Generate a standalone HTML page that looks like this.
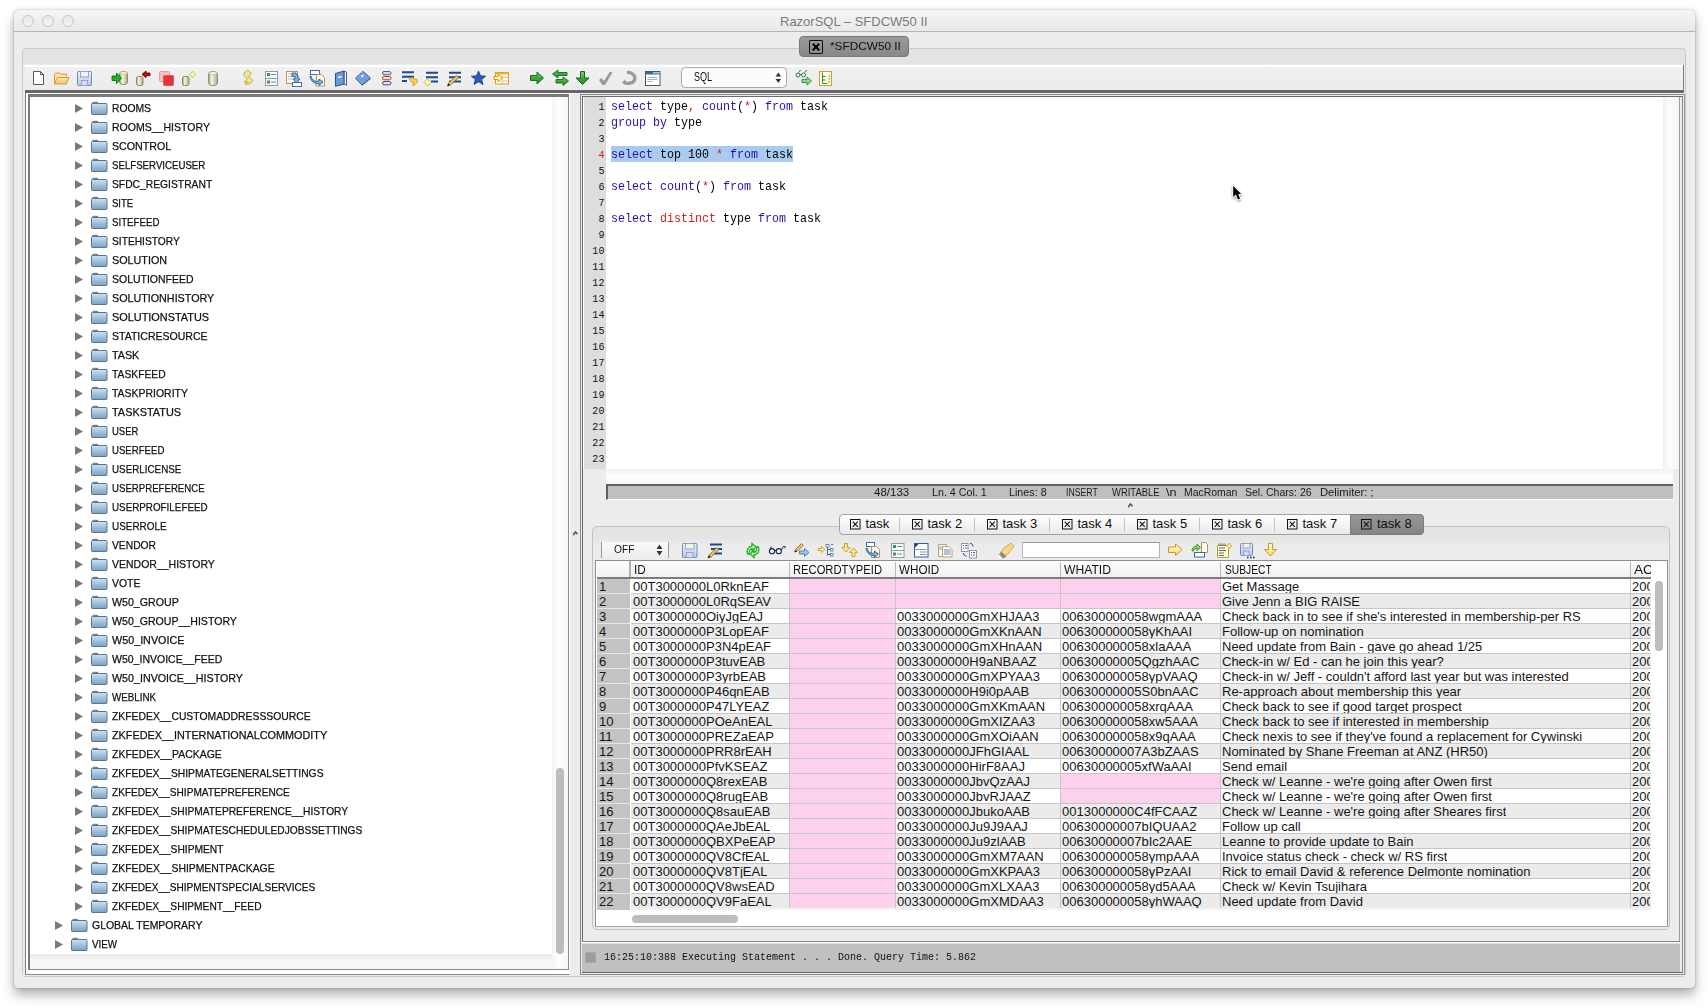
<!DOCTYPE html><html><head><meta charset="utf-8"><title>RazorSQL</title><style>
*{margin:0;padding:0;box-sizing:border-box}
html,body{width:1708px;height:1008px;overflow:hidden;background:#fff;font-family:"Liberation Sans",sans-serif;color:#000}
.a{position:absolute}
.t{position:absolute;white-space:pre;line-height:1}

.tr{font-size:11px;color:#111;-webkit-text-stroke:0.25px #111;transform-origin:0 0;transform:scaleX(0.85)}
.st{font-size:11px;color:#222}
.ln{font-family:"Liberation Mono",monospace;font-size:10px;text-align:right;letter-spacing:0.4px}
.code{font-family:"Liberation Mono",monospace;font-size:11.67px;transform-origin:0 8.945px;transform:scaleY(1.12)}
.tab{font-size:13px;color:#111}
.hd{font-size:12px;color:#111;transform-origin:0 0;transform:scaleX(0.93)}
.cell{font-size:13px;color:#151515}
</style></head><body><div class="a" style="left:14px;top:10px;width:1681px;height:978px;border-radius:5px 5px 4px 4px;box-shadow:0 7px 12px rgba(0,0,0,0.30),0 0 5px rgba(0,0,0,0.12),0 0 1px rgba(0,0,0,0.45);background:#ececec"></div><div class="a" style="left:14px;top:10px;width:1681px;height:22px;border-radius:5px 5px 0 0;background:linear-gradient(#f6f6f6,#e8e8e8);border-bottom:1px solid #b5b5b5"></div><div class="a" style="left:22px;top:15px;width:12px;height:12px;border-radius:50%;border:1px solid #c4c4c4;background:linear-gradient(#e9e9e9,#f3f3f3)"></div><div class="a" style="left:42px;top:15px;width:12px;height:12px;border-radius:50%;border:1px solid #c4c4c4;background:linear-gradient(#e9e9e9,#f3f3f3)"></div><div class="a" style="left:62px;top:15px;width:12px;height:12px;border-radius:50%;border:1px solid #c4c4c4;background:linear-gradient(#e9e9e9,#f3f3f3)"></div><div class="t" style="left:780px;top:15px;font-size:13px;color:#7b7b7b">RazorSQL – SFDCW50 II</div><div class="a" style="left:22px;top:48px;width:1664px;height:929px;border:1px solid #c9c9c9;border-radius:4px;background:#e4e4e4"></div><div class="a" style="left:799px;top:36px;width:110px;height:21px;border:1px solid #7a7a7a;border-radius:4px;background:linear-gradient(#9a9a9a,#888888)"></div><div class="a" style="left:809px;top:40px;width:14px;height:14px;border:1.5px solid #111;border-radius:1px"></div><svg class="a" style="left:809px;top:40px" width="14" height="14"><path d="M3.8 3.8L10.2 10.2M10.2 3.8L3.8 10.2" stroke="#000" stroke-width="2.1"/></svg><div class="t" style="left:829.60px;top:41.07px;font-size:11.5px;color:#111;transform:scaleX(1.0274);transform-origin:0 0;">*SFDCW50 II</div><div class="a" style="left:23px;top:64px;width:1662px;height:912px;background:#ececec"></div><div class="a" style="left:25px;top:65px;width:1659px;height:28px;background:linear-gradient(#ffffff 0,#ffffff 1.5px,#f1f1f1 2.5px,#ececec 25px,#777 25px,#555 27px,#888 28px);box-shadow:inset -1px 0 0 #7a7a7a"></div><svg class="a" style="left:0;top:0" width="850" height="100" viewBox="0 0 850 100"><defs>
<linearGradient id="cyl" x1="0" x2="1"><stop offset="0" stop-color="#9a9a80"/><stop offset="0.35" stop-color="#f6f6ee"/><stop offset="1" stop-color="#a8a890"/></linearGradient>
<linearGradient id="grn" x1="0" y1="0" x2="0" y2="1"><stop offset="0" stop-color="#7fd07f"/><stop offset="0.5" stop-color="#3aa83a"/><stop offset="1" stop-color="#2a8a2a"/></linearGradient>
<linearGradient id="sav" x1="0" y1="0" x2="0" y2="1"><stop offset="0" stop-color="#eef2fb"/><stop offset="1" stop-color="#b8c8ea"/></linearGradient>
<linearGradient id="fold" x1="0" y1="0" x2="0" y2="1"><stop offset="0" stop-color="#fde7b0"/><stop offset="1" stop-color="#f2c46c"/></linearGradient>
</defs><path d="M33.5 71.5h7l3 3v10h-10z" fill="#fff" stroke="#5a5a5a"/><path d="M40.5 71.5v3h3" fill="none" stroke="#5a5a5a"/><path d="M54.5 83.5v-9l1-1.5h4l1 1h6v2.5" fill="#fbe3a8" stroke="#d39a3a"/><path d="M54.5 83.5l3-6h11.5l-3 6.5h-11.5z" fill="url(#fold)" stroke="#d39a3a"/><rect x="77.5" y="71.5" width="14" height="14" rx="1" fill="url(#sav)" stroke="#6f8ac4"/><rect x="80.5" y="71.5" width="8" height="5.5" fill="#f4f4f0" stroke="#8ea3d0"/><rect x="81.5" y="80.5" width="6" height="5" fill="#d6def2" stroke="#8ea3d0"/><rect x="119.5" y="71.5" width="8" height="13" rx="3" fill="url(#cyl)" stroke="#8d8d3c"/><ellipse cx="123.5" cy="73" rx="3.5" ry="1.3" fill="#fff" stroke="#bdbd60" stroke-width="0.8"/><path d="M112 76h4.5v-3l5 5l-5 5.5v-3h-4.5z" fill="#1fb51f" stroke="#0a600a" stroke-width="0.8"/><rect x="136.5" y="76.5" width="6.5" height="9" rx="2" fill="url(#cyl)" stroke="#8d8d3c"/><path d="M150 73h-4v-2l-4 3.3l4 3.4v-2h4z" fill="#e00000" stroke="#400" stroke-width="0.8"/><rect x="159.5" y="71.5" width="10" height="10" rx="1" fill="#f6c0c0" stroke="#e89a9a"/><rect x="163.5" y="75.5" width="10" height="10" rx="1" fill="#e8323c" stroke="#d05a60"/><rect x="182.5" y="76.5" width="6.5" height="9" rx="2" fill="url(#cyl)" stroke="#8d8d3c"/><path d="M192.5 71l1.2 2.3l2.3 1.2l-2.3 1.2l-1.2 2.3l-1.2-2.3l-2.3-1.2l2.3-1.2z" fill="#ffffd0" stroke="#d8c040" stroke-width="0.9"/><rect x="208.5" y="71.5" width="9" height="14" rx="3.5" fill="url(#cyl)" stroke="#8f8f6a"/><ellipse cx="213" cy="73.2" rx="3.5" ry="1.4" fill="#fcfcf4" stroke="#b0b090" stroke-width="0.7"/><path d="M244 73l3.5-3l4 3.5l-3 3l4.5 4l-3.5 3.5l-3-0.5l-2-2l3-3l-3.5-3z" fill="#f0e890" stroke="#b8a840" stroke-width="0.9"/><circle cx="246.5" cy="83" r="1.6" fill="#e8d860" stroke="#a89830" stroke-width="0.6"/><rect x="265.5" y="71.5" width="12" height="14" fill="#fafcfc" stroke="#8aa0a0"/><line x1="265.5" y1="78.5" x2="277.5" y2="78.5" stroke="#8aa0a0"/><rect x="267" y="73" width="3" height="3" fill="#2a9a5a"/><rect x="267" y="80.5" width="3" height="3" fill="#6a7a8a"/><path d="M271 74.5h5M271 82h5" stroke="#4a6a6a" stroke-width="0.8"/><rect x="286.5" y="71.5" width="11" height="12" fill="#fdfbf0" stroke="#b09860"/><path d="M288 74h7M288 76.5h7M288 79h5" stroke="#9aaac0" stroke-width="0.7"/><path d="M292 73h4l2 3v3h2l-3.5 4l-3.5-4h2v-2.5h-3z" fill="#7ab8d8" stroke="#2a5a9a" stroke-width="0.9"/><rect x="292.5" y="82.5" width="9" height="4" fill="#fff" stroke="#4a6aa0"/><rect x="310.5" y="70.5" width="9" height="4" fill="#fff" stroke="#4a6aa0"/><path d="M316.5 74.5h5l3 3v8.5h-8.5z" fill="#fdfbf0" stroke="#b09860"/><path d="M311 76c1 5 5 6 8 5v-2l4 3l-4 3.5v-2c-4 0.5-8-2-9-7z" fill="#7ab8d8" stroke="#2a5a9a" stroke-width="0.9"/><path d="M344 71l2.5 1.2v13l-2.5-1.2z" fill="#fff" stroke="#2f4f80" stroke-width="0.9"/><path d="M335.5 73.5l8.5-2.5v13.2l-8.5 2z" fill="#6a9ad8" stroke="#2f4f80"/><path d="M338.3 77.5l3.2-1" stroke="#fff" stroke-width="1.4"/><path d="M355.3 78.2l7.6-7l7.6 6.8l-8.6 7z" fill="#6f9fe0" stroke="#3f5f8a" stroke-width="0.9" stroke-linejoin="round"/><path d="M362.2 85.3l8.6-6.6" stroke="#222" stroke-width="0.9" stroke-dasharray="1.2 1"/><path d="M356 77.8l6.5-6.2" stroke="#d8b040" stroke-width="0.8" stroke-dasharray="1.5 2"/><path d="M361.2 76.8l2.3-1.8" stroke="#fff" stroke-width="1.5"/><rect x="382.5" y="71.5" width="8.5" height="3.3" rx="1.6" fill="#d0e4dc" stroke="#3f5a78" stroke-width="0.95"/><rect x="382.5" y="76.5" width="8.5" height="3.3" rx="1.6" fill="#ffe0d8" stroke="#9a3a3a" stroke-width="0.95"/><rect x="382.5" y="81.5" width="8.5" height="3.3" rx="1.6" fill="#e0e0ff" stroke="#3f3f8a" stroke-width="0.95"/><path d="M402 72.2h12M402 76.8h12M402 81h5" stroke="#1a4a90" stroke-width="2"/><path d="M409 79l3-1.5l2 1.5h2.5l1 2.5l-2.5 3l-1.5 1.5l-1-2l1.5-2h-2l-2-1.5z" fill="#f8d840" stroke="#b89020" stroke-width="0.8"/><path d="M426 72.8h12M426 77.2h12M431 81.5h7" stroke="#1a4a90" stroke-width="2"/><path d="M427.5 79l3.5 3.5l-3.5 3.5l-3.5-3.5z" fill="#fff8c0" stroke="#c8a830" stroke-width="0.9"/><path d="M449 72.8h12M449 77.2h12M449 81.5h12" stroke="#1a4a90" stroke-width="2"/><path d="M447.5 86l1-3l8-7.5l2 2l-8 7.5z" fill="#f0c060" stroke="#806020" stroke-width="0.8"/><path d="M447.5 86l1-2.5l1.5 1.5z" fill="#000"/><path d="M478.5 71l2 4.8l5.2 0.4l-4 3.3l1.3 5.1l-4.5-2.8l-4.5 2.8l1.3-5.1l-4-3.3l5.2-0.4z" fill="#2a5ab8" stroke="#1a3a80" stroke-width="0.8"/><rect x="495.5" y="72.5" width="13" height="11.5" fill="#fffdf0" stroke="#d89a20"/><rect x="495.5" y="72.5" width="13" height="1.8" fill="#f0b020"/><path d="M502 77.5h6.5M502 81h6.5M502 74.5v9.5" stroke="#d8b060" stroke-width="0.8"/><path d="M494 76.5h4v-2.5l4.5 4l-4.5 4v-2.5h-4z" fill="#fff8b0" stroke="#c89020" stroke-width="0.9"/><path d="M530.5 75.5h6.5v-3.5l6.5 6l-6.5 6v-3.5h-6.5z" fill="url(#grn)" stroke="#1a6a1a"/><path d="M567 72.5h-9v-2.5l-5.5 4l5.5 4v-2.5h9z" fill="url(#grn)" stroke="#1a6a1a" stroke-width="0.9"/><path d="M556 79.5h7v-2.5l5.5 4l-5.5 4.5v-2.5h-7z" fill="url(#grn)" stroke="#1a6a1a" stroke-width="0.9"/><path d="M580.5 71.5h4v6.5h4.5l-6.5 6.5l-6.5-6.5h4.5z" fill="url(#grn)" stroke="#1a6a1a"/><path d="M599 80l2.5-2l2.5 3l6-9.5l2.5 1l-7.5 12.5h-2.5z" fill="#999"/><path d="M624 82.5c3 1.5 9 1 10.5-2.5c1.5-4-2-8-7.5-7.5" fill="none" stroke="#999" stroke-width="3.2"/><path d="M621.5 83l3.5-3.5l1.5 4z" fill="#999"/><rect x="645.5" y="71.5" width="14.5" height="14" fill="#fff" stroke="#555"/><rect x="646" y="72" width="13.5" height="2.5" fill="#2a70b0"/><rect x="653" y="72" width="6.5" height="1.5" fill="#9ad0f0"/><path d="M647.5 77.5h10M647.5 79.5h10M647.5 81.5h5" stroke="#7aa0c8" stroke-width="0.8"/><rect x="681.5" y="67.5" width="105" height="20" rx="4" fill="#fcfcfc" stroke="#a8a8a8"/><path d="M775.5 76.5l2.8-4l2.8 4z M775.5 79l2.8 4l2.8-4z" fill="#333"/><path d="M796 75a2 2 0 1 0 4 0a2 2 0 1 0-4 0M801.5 75a2 2 0 1 0 4 0a2 2 0 1 0-4 0M800 74.5h1.5M799 72.5l1.5-2.5M805 72.5l1.5-2.5" fill="none" stroke="#2a7a5a" stroke-width="1"/><path d="M802 79.5h5v-2.5l4.5 4l-4.5 4v-2.5h-5z" fill="#8ad88a" stroke="#2a8a3a" stroke-width="0.9"/><rect x="819.5" y="71.5" width="12" height="14" fill="#fdfde8" stroke="#c8a030"/><path d="M822.5 73v10.5h5M822.5 76.5h3M822.5 80h3M828.5 76h1.5M828.5 79h1.5M828.5 82h1.5" fill="none" stroke="#3a8a3a" stroke-width="1"/></svg><div class="t" style="left:693.90px;top:70.94px;font-size:12px;color:#111;transform:scaleX(0.7538);transform-origin:0 0;">SQL</div><div class="a" style="left:25px;top:93px;width:545px;height:882px;background:#fff;border-left:1px solid #7c7c7c;border-bottom:1px solid #8a8a8a;border-right:1px solid #fff"></div><div class="a" style="left:28px;top:94px;width:541px;height:876px;background:#fff;border-top:3px solid #7a7a7a;border-left:2px solid #7a7a7a;border-right:1px solid #8a8a8a;border-bottom:1px solid #8a8a8a"></div><div class="a" style="left:552px;top:97px;width:16px;height:872px;background:linear-gradient(90deg,#f4f4f4,#fdfdfd 40%,#f6f6f6)"></div><div class="a" style="left:556px;top:768px;width:8px;height:186px;border-radius:4px;background:#bdbdbd"></div><div class="a" style="left:30px;top:954px;width:522px;height:15px;background:linear-gradient(#e9e9e9,#f7f7f7 40%,#f7f7f7)"></div><svg width="0" height="0" style="position:absolute"><defs><linearGradient id="fgr" x1="0" y1="0" x2="0" y2="1"><stop offset="0" stop-color="#cde2f4"/><stop offset="0.5" stop-color="#a3c1dc"/><stop offset="1" stop-color="#7aa2c4"/></linearGradient><symbol id="tfold" viewBox="0 0 17 14"><path d="M1.5 3.5v-1.2q0-1 1-1h3.6q1 0 1 1v1.2" fill="#9fb6ca" stroke="#5f7486"/><rect x="0.5" y="2.5" width="15.5" height="11" rx="0.8" fill="url(#fgr)" stroke="#5f7486"/></symbol></defs></svg><svg class="a" style="left:75px;top:104px" width="8" height="9"><path d="M0 0L8 4.5L0 9z" fill="#787878"/></svg><svg class="a" style="left:91px;top:101px" width="17" height="14"><use href="#tfold" x="0" y="0" width="17" height="14"/></svg><div class="t tr" style="left:111.7px;top:103px;transform:scaleX(0.9385)">ROOMS</div><svg class="a" style="left:75px;top:123px" width="8" height="9"><path d="M0 0L8 4.5L0 9z" fill="#787878"/></svg><svg class="a" style="left:91px;top:120px" width="17" height="14"><use href="#tfold" x="0" y="0" width="17" height="14"/></svg><div class="t tr" style="left:111.7px;top:122px;transform:scaleX(0.9571)">ROOMS__HISTORY</div><svg class="a" style="left:75px;top:142px" width="8" height="9"><path d="M0 0L8 4.5L0 9z" fill="#787878"/></svg><svg class="a" style="left:91px;top:139px" width="17" height="14"><use href="#tfold" x="0" y="0" width="17" height="14"/></svg><div class="t tr" style="left:111.7px;top:141px;transform:scaleX(0.9686)">SCONTROL</div><svg class="a" style="left:75px;top:161px" width="8" height="9"><path d="M0 0L8 4.5L0 9z" fill="#787878"/></svg><svg class="a" style="left:91px;top:158px" width="17" height="14"><use href="#tfold" x="0" y="0" width="17" height="14"/></svg><div class="t tr" style="left:111.7px;top:160px;transform:scaleX(0.8788)">SELFSERVICEUSER</div><svg class="a" style="left:75px;top:180px" width="8" height="9"><path d="M0 0L8 4.5L0 9z" fill="#787878"/></svg><svg class="a" style="left:91px;top:177px" width="17" height="14"><use href="#tfold" x="0" y="0" width="17" height="14"/></svg><div class="t tr" style="left:111.7px;top:179px;transform:scaleX(0.9368)">SFDC_REGISTRANT</div><svg class="a" style="left:75px;top:199px" width="8" height="9"><path d="M0 0L8 4.5L0 9z" fill="#787878"/></svg><svg class="a" style="left:91px;top:196px" width="17" height="14"><use href="#tfold" x="0" y="0" width="17" height="14"/></svg><div class="t tr" style="left:111.7px;top:198px;transform:scaleX(0.8671)">SITE</div><svg class="a" style="left:75px;top:218px" width="8" height="9"><path d="M0 0L8 4.5L0 9z" fill="#787878"/></svg><svg class="a" style="left:91px;top:215px" width="17" height="14"><use href="#tfold" x="0" y="0" width="17" height="14"/></svg><div class="t tr" style="left:111.7px;top:217px;transform:scaleX(0.8831)">SITEFEED</div><svg class="a" style="left:75px;top:237px" width="8" height="9"><path d="M0 0L8 4.5L0 9z" fill="#787878"/></svg><svg class="a" style="left:91px;top:234px" width="17" height="14"><use href="#tfold" x="0" y="0" width="17" height="14"/></svg><div class="t tr" style="left:111.7px;top:236px;transform:scaleX(0.9295)">SITEHISTORY</div><svg class="a" style="left:75px;top:256px" width="8" height="9"><path d="M0 0L8 4.5L0 9z" fill="#787878"/></svg><svg class="a" style="left:91px;top:253px" width="17" height="14"><use href="#tfold" x="0" y="0" width="17" height="14"/></svg><div class="t tr" style="left:111.7px;top:255px;transform:scaleX(0.9799)">SOLUTION</div><svg class="a" style="left:75px;top:275px" width="8" height="9"><path d="M0 0L8 4.5L0 9z" fill="#787878"/></svg><svg class="a" style="left:91px;top:272px" width="17" height="14"><use href="#tfold" x="0" y="0" width="17" height="14"/></svg><div class="t tr" style="left:111.7px;top:274px;transform:scaleX(0.9525)">SOLUTIONFEED</div><svg class="a" style="left:75px;top:294px" width="8" height="9"><path d="M0 0L8 4.5L0 9z" fill="#787878"/></svg><svg class="a" style="left:91px;top:291px" width="17" height="14"><use href="#tfold" x="0" y="0" width="17" height="14"/></svg><div class="t tr" style="left:111.7px;top:293px;transform:scaleX(0.9759)">SOLUTIONHISTORY</div><svg class="a" style="left:75px;top:313px" width="8" height="9"><path d="M0 0L8 4.5L0 9z" fill="#787878"/></svg><svg class="a" style="left:91px;top:310px" width="17" height="14"><use href="#tfold" x="0" y="0" width="17" height="14"/></svg><div class="t tr" style="left:111.7px;top:312px;transform:scaleX(0.9909)">SOLUTIONSTATUS</div><svg class="a" style="left:75px;top:332px" width="8" height="9"><path d="M0 0L8 4.5L0 9z" fill="#787878"/></svg><svg class="a" style="left:91px;top:329px" width="17" height="14"><use href="#tfold" x="0" y="0" width="17" height="14"/></svg><div class="t tr" style="left:111.7px;top:331px;transform:scaleX(0.9577)">STATICRESOURCE</div><svg class="a" style="left:75px;top:351px" width="8" height="9"><path d="M0 0L8 4.5L0 9z" fill="#787878"/></svg><svg class="a" style="left:91px;top:348px" width="17" height="14"><use href="#tfold" x="0" y="0" width="17" height="14"/></svg><div class="t tr" style="left:111.7px;top:350px;transform:scaleX(0.9780)">TASK</div><svg class="a" style="left:75px;top:370px" width="8" height="9"><path d="M0 0L8 4.5L0 9z" fill="#787878"/></svg><svg class="a" style="left:91px;top:367px" width="17" height="14"><use href="#tfold" x="0" y="0" width="17" height="14"/></svg><div class="t tr" style="left:111.7px;top:369px;transform:scaleX(0.9362)">TASKFEED</div><svg class="a" style="left:75px;top:389px" width="8" height="9"><path d="M0 0L8 4.5L0 9z" fill="#787878"/></svg><svg class="a" style="left:91px;top:386px" width="17" height="14"><use href="#tfold" x="0" y="0" width="17" height="14"/></svg><div class="t tr" style="left:111.7px;top:388px;transform:scaleX(0.9504)">TASKPRIORITY</div><svg class="a" style="left:75px;top:408px" width="8" height="9"><path d="M0 0L8 4.5L0 9z" fill="#787878"/></svg><svg class="a" style="left:91px;top:405px" width="17" height="14"><use href="#tfold" x="0" y="0" width="17" height="14"/></svg><div class="t tr" style="left:111.7px;top:407px;transform:scaleX(0.9918)">TASKSTATUS</div><svg class="a" style="left:75px;top:427px" width="8" height="9"><path d="M0 0L8 4.5L0 9z" fill="#787878"/></svg><svg class="a" style="left:91px;top:424px" width="17" height="14"><use href="#tfold" x="0" y="0" width="17" height="14"/></svg><div class="t tr" style="left:111.7px;top:426px;transform:scaleX(0.8606)">USER</div><svg class="a" style="left:75px;top:446px" width="8" height="9"><path d="M0 0L8 4.5L0 9z" fill="#787878"/></svg><svg class="a" style="left:91px;top:443px" width="17" height="14"><use href="#tfold" x="0" y="0" width="17" height="14"/></svg><div class="t tr" style="left:111.7px;top:445px;transform:scaleX(0.8748)">USERFEED</div><svg class="a" style="left:75px;top:465px" width="8" height="9"><path d="M0 0L8 4.5L0 9z" fill="#787878"/></svg><svg class="a" style="left:91px;top:462px" width="17" height="14"><use href="#tfold" x="0" y="0" width="17" height="14"/></svg><div class="t tr" style="left:111.7px;top:464px;transform:scaleX(0.8939)">USERLICENSE</div><svg class="a" style="left:75px;top:484px" width="8" height="9"><path d="M0 0L8 4.5L0 9z" fill="#787878"/></svg><svg class="a" style="left:91px;top:481px" width="17" height="14"><use href="#tfold" x="0" y="0" width="17" height="14"/></svg><div class="t tr" style="left:111.7px;top:483px;transform:scaleX(0.8757)">USERPREFERENCE</div><svg class="a" style="left:75px;top:503px" width="8" height="9"><path d="M0 0L8 4.5L0 9z" fill="#787878"/></svg><svg class="a" style="left:91px;top:500px" width="17" height="14"><use href="#tfold" x="0" y="0" width="17" height="14"/></svg><div class="t tr" style="left:111.7px;top:502px;transform:scaleX(0.8937)">USERPROFILEFEED</div><svg class="a" style="left:75px;top:522px" width="8" height="9"><path d="M0 0L8 4.5L0 9z" fill="#787878"/></svg><svg class="a" style="left:91px;top:519px" width="17" height="14"><use href="#tfold" x="0" y="0" width="17" height="14"/></svg><div class="t tr" style="left:111.7px;top:521px;transform:scaleX(0.9022)">USERROLE</div><svg class="a" style="left:75px;top:541px" width="8" height="9"><path d="M0 0L8 4.5L0 9z" fill="#787878"/></svg><svg class="a" style="left:91px;top:538px" width="17" height="14"><use href="#tfold" x="0" y="0" width="17" height="14"/></svg><div class="t tr" style="left:111.7px;top:540px;transform:scaleX(0.9349)">VENDOR</div><svg class="a" style="left:75px;top:560px" width="8" height="9"><path d="M0 0L8 4.5L0 9z" fill="#787878"/></svg><svg class="a" style="left:91px;top:557px" width="17" height="14"><use href="#tfold" x="0" y="0" width="17" height="14"/></svg><div class="t tr" style="left:111.7px;top:559px;transform:scaleX(0.9537)">VENDOR__HISTORY</div><svg class="a" style="left:75px;top:579px" width="8" height="9"><path d="M0 0L8 4.5L0 9z" fill="#787878"/></svg><svg class="a" style="left:91px;top:576px" width="17" height="14"><use href="#tfold" x="0" y="0" width="17" height="14"/></svg><div class="t tr" style="left:111.7px;top:578px;transform:scaleX(0.9483)">VOTE</div><svg class="a" style="left:75px;top:598px" width="8" height="9"><path d="M0 0L8 4.5L0 9z" fill="#787878"/></svg><svg class="a" style="left:91px;top:595px" width="17" height="14"><use href="#tfold" x="0" y="0" width="17" height="14"/></svg><div class="t tr" style="left:111.7px;top:597px;transform:scaleX(0.9671)">W50_GROUP</div><svg class="a" style="left:75px;top:617px" width="8" height="9"><path d="M0 0L8 4.5L0 9z" fill="#787878"/></svg><svg class="a" style="left:91px;top:614px" width="17" height="14"><use href="#tfold" x="0" y="0" width="17" height="14"/></svg><div class="t tr" style="left:111.7px;top:616px;transform:scaleX(0.9622)">W50_GROUP__HISTORY</div><svg class="a" style="left:75px;top:636px" width="8" height="9"><path d="M0 0L8 4.5L0 9z" fill="#787878"/></svg><svg class="a" style="left:91px;top:633px" width="17" height="14"><use href="#tfold" x="0" y="0" width="17" height="14"/></svg><div class="t tr" style="left:111.7px;top:635px;transform:scaleX(0.9788)">W50_INVOICE</div><svg class="a" style="left:75px;top:655px" width="8" height="9"><path d="M0 0L8 4.5L0 9z" fill="#787878"/></svg><svg class="a" style="left:91px;top:652px" width="17" height="14"><use href="#tfold" x="0" y="0" width="17" height="14"/></svg><div class="t tr" style="left:111.7px;top:654px;transform:scaleX(0.9555)">W50_INVOICE__FEED</div><svg class="a" style="left:75px;top:674px" width="8" height="9"><path d="M0 0L8 4.5L0 9z" fill="#787878"/></svg><svg class="a" style="left:91px;top:671px" width="17" height="14"><use href="#tfold" x="0" y="0" width="17" height="14"/></svg><div class="t tr" style="left:111.7px;top:673px;transform:scaleX(0.9726)">W50_INVOICE__HISTORY</div><svg class="a" style="left:75px;top:693px" width="8" height="9"><path d="M0 0L8 4.5L0 9z" fill="#787878"/></svg><svg class="a" style="left:91px;top:690px" width="17" height="14"><use href="#tfold" x="0" y="0" width="17" height="14"/></svg><div class="t tr" style="left:111.7px;top:692px;transform:scaleX(0.8887)">WEBLINK</div><svg class="a" style="left:75px;top:712px" width="8" height="9"><path d="M0 0L8 4.5L0 9z" fill="#787878"/></svg><svg class="a" style="left:91px;top:709px" width="17" height="14"><use href="#tfold" x="0" y="0" width="17" height="14"/></svg><div class="t tr" style="left:111.7px;top:711px;transform:scaleX(0.9432)">ZKFEDEX__CUSTOMADDRESSSOURCE</div><svg class="a" style="left:75px;top:731px" width="8" height="9"><path d="M0 0L8 4.5L0 9z" fill="#787878"/></svg><svg class="a" style="left:91px;top:728px" width="17" height="14"><use href="#tfold" x="0" y="0" width="17" height="14"/></svg><div class="t tr" style="left:111.7px;top:730px;transform:scaleX(0.9840)">ZKFEDEX__INTERNATIONALCOMMODITY</div><svg class="a" style="left:75px;top:750px" width="8" height="9"><path d="M0 0L8 4.5L0 9z" fill="#787878"/></svg><svg class="a" style="left:91px;top:747px" width="17" height="14"><use href="#tfold" x="0" y="0" width="17" height="14"/></svg><div class="t tr" style="left:111.7px;top:749px;transform:scaleX(0.9520)">ZKFEDEX__PACKAGE</div><svg class="a" style="left:75px;top:769px" width="8" height="9"><path d="M0 0L8 4.5L0 9z" fill="#787878"/></svg><svg class="a" style="left:91px;top:766px" width="17" height="14"><use href="#tfold" x="0" y="0" width="17" height="14"/></svg><div class="t tr" style="left:111.7px;top:768px;transform:scaleX(0.9360)">ZKFEDEX__SHIPMATEGENERALSETTINGS</div><svg class="a" style="left:75px;top:788px" width="8" height="9"><path d="M0 0L8 4.5L0 9z" fill="#787878"/></svg><svg class="a" style="left:91px;top:785px" width="17" height="14"><use href="#tfold" x="0" y="0" width="17" height="14"/></svg><div class="t tr" style="left:111.7px;top:787px;transform:scaleX(0.9181)">ZKFEDEX__SHIPMATEPREFERENCE</div><svg class="a" style="left:75px;top:807px" width="8" height="9"><path d="M0 0L8 4.5L0 9z" fill="#787878"/></svg><svg class="a" style="left:91px;top:804px" width="17" height="14"><use href="#tfold" x="0" y="0" width="17" height="14"/></svg><div class="t tr" style="left:111.7px;top:806px;transform:scaleX(0.9285)">ZKFEDEX__SHIPMATEPREFERENCE__HISTORY</div><svg class="a" style="left:75px;top:826px" width="8" height="9"><path d="M0 0L8 4.5L0 9z" fill="#787878"/></svg><svg class="a" style="left:91px;top:823px" width="17" height="14"><use href="#tfold" x="0" y="0" width="17" height="14"/></svg><div class="t tr" style="left:111.7px;top:825px;transform:scaleX(0.9272)">ZKFEDEX__SHIPMATESCHEDULEDJOBSSETTINGS</div><svg class="a" style="left:75px;top:845px" width="8" height="9"><path d="M0 0L8 4.5L0 9z" fill="#787878"/></svg><svg class="a" style="left:91px;top:842px" width="17" height="14"><use href="#tfold" x="0" y="0" width="17" height="14"/></svg><div class="t tr" style="left:111.7px;top:844px;transform:scaleX(0.9307)">ZKFEDEX__SHIPMENT</div><svg class="a" style="left:75px;top:864px" width="8" height="9"><path d="M0 0L8 4.5L0 9z" fill="#787878"/></svg><svg class="a" style="left:91px;top:861px" width="17" height="14"><use href="#tfold" x="0" y="0" width="17" height="14"/></svg><div class="t tr" style="left:111.7px;top:863px;transform:scaleX(0.9444)">ZKFEDEX__SHIPMENTPACKAGE</div><svg class="a" style="left:75px;top:883px" width="8" height="9"><path d="M0 0L8 4.5L0 9z" fill="#787878"/></svg><svg class="a" style="left:91px;top:880px" width="17" height="14"><use href="#tfold" x="0" y="0" width="17" height="14"/></svg><div class="t tr" style="left:111.7px;top:882px;transform:scaleX(0.9170)">ZKFEDEX__SHIPMENTSPECIALSERVICES</div><svg class="a" style="left:75px;top:902px" width="8" height="9"><path d="M0 0L8 4.5L0 9z" fill="#787878"/></svg><svg class="a" style="left:91px;top:899px" width="17" height="14"><use href="#tfold" x="0" y="0" width="17" height="14"/></svg><div class="t tr" style="left:111.7px;top:901px;transform:scaleX(0.9264)">ZKFEDEX__SHIPMENT__FEED</div><svg class="a" style="left:55px;top:921px" width="8" height="9"><path d="M0 0L8 4.5L0 9z" fill="#787878"/></svg><svg class="a" style="left:71px;top:918px" width="17" height="14"><use href="#tfold" x="0" y="0" width="17" height="14"/></svg><div class="t tr" style="left:91.7px;top:920px;transform:scaleX(0.9524)">GLOBAL TEMPORARY</div><svg class="a" style="left:55px;top:940px" width="8" height="9"><path d="M0 0L8 4.5L0 9z" fill="#787878"/></svg><svg class="a" style="left:71px;top:937px" width="17" height="14"><use href="#tfold" x="0" y="0" width="17" height="14"/></svg><div class="t tr" style="left:91.7px;top:939px;transform:scaleX(0.8893)">VIEW</div><div class="a" style="left:580px;top:94px;width:1105px;height:881px;border:1px solid #8a8a8a;border-right-color:#9a9a9a"></div><div class="a" style="left:582px;top:96px;width:1101px;height:877px;border:1px solid #6a6a6a;border-right-color:#8a8a8a;background:#ececec"></div><div class="a" style="left:1679px;top:97px;width:1px;height:844px;background:#9c9c9c"></div><div class="a" style="left:583px;top:97px;width:1081px;height:372px;background:#fff"></div><div class="a" style="left:584px;top:97px;width:22px;height:372px;background:#dddddd"></div><div class="a" style="left:1663px;top:97px;width:16px;height:372px;background:linear-gradient(90deg,#f1f1f1,#fcfcfc 40%,#f5f5f5)"></div><div class="a" style="left:606px;top:469px;width:1067px;height:15px;background:linear-gradient(#f1f1f1,#fdfdfd 50%,#f7f7f7)"></div><div class="a" style="left:606px;top:484px;width:1067px;height:16px;background:#bfbfbf;border-top:2px solid #606060;border-left:2px solid #606060;border-bottom:1px solid #fff"></div><div class="t" style="left:873.60px;top:488.04px;font-size:10px;color:#1a1a1a;transform:scaleX(1.1509);transform-origin:0 0;">48/133</div><div class="t" style="left:931.50px;top:488.04px;font-size:10px;color:#1a1a1a;transform:scaleX(1.0696);transform-origin:0 0;">Ln. 4 Col. 1</div><div class="t" style="left:1008.90px;top:488.04px;font-size:10px;color:#1a1a1a;transform:scaleX(1.0735);transform-origin:0 0;">Lines: 8</div><div class="t" style="left:1066.00px;top:488.04px;font-size:10px;color:#1a1a1a;transform:scaleX(0.8715);transform-origin:0 0;">INSERT</div><div class="t" style="left:1111.70px;top:488.04px;font-size:10px;color:#1a1a1a;transform:scaleX(0.9449);transform-origin:0 0;">WRITABLE</div><div class="t" style="left:1165.60px;top:488.04px;font-size:10px;color:#1a1a1a;transform:scaleX(1.2590);transform-origin:0 0;">\n</div><div class="t" style="left:1183.90px;top:488.04px;font-size:10px;color:#1a1a1a;transform:scaleX(1.0425);transform-origin:0 0;">MacRoman</div><div class="t" style="left:1244.70px;top:488.04px;font-size:10px;color:#1a1a1a;transform:scaleX(1.0511);transform-origin:0 0;">Sel. Chars: 26</div><div class="t" style="left:1320.10px;top:488.04px;font-size:10px;color:#1a1a1a;transform:scaleX(1.1238);transform-origin:0 0;">Delimiter: ;</div><svg class="a" style="left:1127px;top:502px" width="7" height="6"><path d="M1.6 4.6L3.3 2L5 3.6" stroke="#5a5a5a" stroke-width="1.7" stroke-linecap="round" stroke-linejoin="round" fill="none"/></svg><svg class="a" style="left:572px;top:530px" width="7" height="6"><path d="M1.6 4.6L3.3 2L5 3.6" stroke="#5a5a5a" stroke-width="1.7" stroke-linecap="round" stroke-linejoin="round" fill="none"/></svg><div class="a" style="left:611px;top:146px;width:182px;height:16px;background:#a9cbf0"></div><div class="t ln" style="left:584px;width:21px;top:102.93px;color:#111">1</div><div class="t code" style="left:611px;top:101.85px"><span style="color:#2412b0">select</span> type<span style="color:#d02020">,</span> <span style="color:#2412b0">count</span>(<span style="color:#d02020">*</span>) <span style="color:#2412b0">from</span> task</div><div class="t ln" style="left:584px;width:21px;top:118.93px;color:#111">2</div><div class="t code" style="left:611px;top:117.85px"><span style="color:#2412b0">group</span> <span style="color:#2412b0">by</span> type</div><div class="t ln" style="left:584px;width:21px;top:134.94px;color:#111">3</div><div class="t ln" style="left:584px;width:21px;top:150.94px;color:#d02020">4</div><div class="t code" style="left:611px;top:149.86px"><span style="color:#2412b0">select</span> top 100 <span style="color:#d02020">*</span> <span style="color:#2412b0">from</span> task</div><div class="t ln" style="left:584px;width:21px;top:166.94px;color:#111">5</div><div class="t ln" style="left:584px;width:21px;top:182.94px;color:#111">6</div><div class="t code" style="left:611px;top:181.86px"><span style="color:#2412b0">select</span> <span style="color:#2412b0">count</span>(<span style="color:#d02020">*</span>) <span style="color:#2412b0">from</span> task</div><div class="t ln" style="left:584px;width:21px;top:198.94px;color:#111">7</div><div class="t ln" style="left:584px;width:21px;top:214.94px;color:#111">8</div><div class="t code" style="left:611px;top:213.86px"><span style="color:#2412b0">select</span> <span style="color:#d02020">distinct</span> type <span style="color:#2412b0">from</span> task</div><div class="t ln" style="left:584px;width:21px;top:230.94px;color:#111">9</div><div class="t ln" style="left:584px;width:21px;top:246.94px;color:#111">10</div><div class="t ln" style="left:584px;width:21px;top:262.94px;color:#111">11</div><div class="t ln" style="left:584px;width:21px;top:278.94px;color:#111">12</div><div class="t ln" style="left:584px;width:21px;top:294.94px;color:#111">13</div><div class="t ln" style="left:584px;width:21px;top:310.94px;color:#111">14</div><div class="t ln" style="left:584px;width:21px;top:326.94px;color:#111">15</div><div class="t ln" style="left:584px;width:21px;top:342.94px;color:#111">16</div><div class="t ln" style="left:584px;width:21px;top:358.94px;color:#111">17</div><div class="t ln" style="left:584px;width:21px;top:374.94px;color:#111">18</div><div class="t ln" style="left:584px;width:21px;top:390.94px;color:#111">19</div><div class="t ln" style="left:584px;width:21px;top:406.94px;color:#111">20</div><div class="t ln" style="left:584px;width:21px;top:422.94px;color:#111">21</div><div class="t ln" style="left:584px;width:21px;top:438.94px;color:#111">22</div><div class="t ln" style="left:584px;width:21px;top:454.94px;color:#111">23</div><div class="a" style="left:592px;top:526px;width:1078px;height:404px;border:1px solid #c2c2c2;border-radius:5px;background:linear-gradient(#e2e2e2,#e6e6e6 12px,#ececec 20px)"></div><div class="a" style="left:839px;top:514px;width:585px;height:21px;border:1px solid #a3a3a3;border-radius:4px;background:linear-gradient(#fefefe,#f4f4f4 50%,#e9e9e9)"></div><div class="a" style="left:899px;top:518px;width:1px;height:14px;background:#c4c4c4"></div><div class="a" style="left:974px;top:518px;width:1px;height:14px;background:#c4c4c4"></div><div class="a" style="left:1049px;top:518px;width:1px;height:14px;background:#c4c4c4"></div><div class="a" style="left:1124px;top:518px;width:1px;height:14px;background:#c4c4c4"></div><div class="a" style="left:1199px;top:518px;width:1px;height:14px;background:#c4c4c4"></div><div class="a" style="left:1274px;top:518px;width:1px;height:14px;background:#c4c4c4"></div><div class="a" style="left:1350px;top:514px;width:74px;height:21px;border:1px solid #7c7c7c;border-radius:0 4px 4px 0;background:linear-gradient(#979797,#858585)"></div><svg class="a" style="left:849.5px;top:518.5px" width="11" height="11"><rect x="0.5" y="0.5" width="9.5" height="9.5" fill="none" stroke="#111" stroke-width="1"/><path d="M2.7 2.7L7.8 7.8M7.8 2.7L2.7 7.8" stroke="#111" stroke-width="1.1"/></svg><div class="t tab" style="left:865.5px;top:517px">task</div><svg class="a" style="left:911.5px;top:518.5px" width="11" height="11"><rect x="0.5" y="0.5" width="9.5" height="9.5" fill="none" stroke="#111" stroke-width="1"/><path d="M2.7 2.7L7.8 7.8M7.8 2.7L2.7 7.8" stroke="#111" stroke-width="1.1"/></svg><div class="t tab" style="left:927.5px;top:517px">task 2</div><svg class="a" style="left:986.5px;top:518.5px" width="11" height="11"><rect x="0.5" y="0.5" width="9.5" height="9.5" fill="none" stroke="#111" stroke-width="1"/><path d="M2.7 2.7L7.8 7.8M7.8 2.7L2.7 7.8" stroke="#111" stroke-width="1.1"/></svg><div class="t tab" style="left:1002.5px;top:517px">task 3</div><svg class="a" style="left:1061.5px;top:518.5px" width="11" height="11"><rect x="0.5" y="0.5" width="9.5" height="9.5" fill="none" stroke="#111" stroke-width="1"/><path d="M2.7 2.7L7.8 7.8M7.8 2.7L2.7 7.8" stroke="#111" stroke-width="1.1"/></svg><div class="t tab" style="left:1077.5px;top:517px">task 4</div><svg class="a" style="left:1136.5px;top:518.5px" width="11" height="11"><rect x="0.5" y="0.5" width="9.5" height="9.5" fill="none" stroke="#111" stroke-width="1"/><path d="M2.7 2.7L7.8 7.8M7.8 2.7L2.7 7.8" stroke="#111" stroke-width="1.1"/></svg><div class="t tab" style="left:1152.5px;top:517px">task 5</div><svg class="a" style="left:1211.5px;top:518.5px" width="11" height="11"><rect x="0.5" y="0.5" width="9.5" height="9.5" fill="none" stroke="#111" stroke-width="1"/><path d="M2.7 2.7L7.8 7.8M7.8 2.7L2.7 7.8" stroke="#111" stroke-width="1.1"/></svg><div class="t tab" style="left:1227.5px;top:517px">task 6</div><svg class="a" style="left:1286.5px;top:518.5px" width="11" height="11"><rect x="0.5" y="0.5" width="9.5" height="9.5" fill="none" stroke="#111" stroke-width="1"/><path d="M2.7 2.7L7.8 7.8M7.8 2.7L2.7 7.8" stroke="#111" stroke-width="1.1"/></svg><div class="t tab" style="left:1302.5px;top:517px">task 7</div><svg class="a" style="left:1361.0px;top:518.5px" width="11" height="11"><rect x="0.5" y="0.5" width="9.5" height="9.5" fill="none" stroke="#111" stroke-width="1"/><path d="M2.7 2.7L7.8 7.8M7.8 2.7L2.7 7.8" stroke="#111" stroke-width="1.1"/></svg><div class="t tab" style="left:1377.0px;top:517px">task 8</div><div class="a" style="left:601px;top:542px;width:68px;height:16px;border-left:1px solid #9a9a9a;border-right:1px solid #9a9a9a;background:linear-gradient(#fbfbfb,#ededed)"></div><div class="t" style="left:614.20px;top:544.31px;font-size:10.5px;color:#111;transform:scaleX(0.9764);transform-origin:0 0;">OFF</div><svg class="a" style="left:656px;top:544px" width="7" height="12"><path d="M0.5 5L3.5 0.5L6.5 5z M0.5 7L3.5 11.5L6.5 7z" fill="#333"/></svg><div class="a" style="left:1022px;top:542px;width:138px;height:16px;background:#fff;border:1px solid #b5b5b5;border-top-color:#9a9a9a"></div><svg class="a" style="left:0;top:530px" width="1290" height="32" viewBox="0 530 1290 32"><defs>
<linearGradient id="sav2" x1="0" y1="0" x2="0" y2="1"><stop offset="0" stop-color="#eef2fb"/><stop offset="1" stop-color="#b8c8ea"/></linearGradient>
<linearGradient id="ylw" x1="0" y1="0" x2="0" y2="1"><stop offset="0" stop-color="#fffbe0"/><stop offset="1" stop-color="#f8d860"/></linearGradient>
</defs><rect x="682.5" y="543.5" width="14.5" height="14" rx="1" fill="url(#sav2)" stroke="#6f8ac4"/><rect x="685.5" y="543.5" width="8.5" height="5.5" fill="#f4f4e4" stroke="#8ea3d0"/><rect x="686.5" y="552.5" width="6.5" height="5" fill="#d6def2" stroke="#8ea3d0"/><path d="M710 544.5h12M711 549h11M713 553.5h9" stroke="#1a4a90" stroke-width="2"/><path d="M708 558l1-3l8-7.5l2 2l-8 7.5z" fill="#f0c060" stroke="#806020" stroke-width="0.8"/><path d="M708 558l1-2.5l1.5 1.5z" fill="#000"/><path d="M747.5 554c-1.5-4 1-7.5 4.5-8v-2.5l4 3.5l-4 3.5v-2c-2 0.3-3.5 2.5-2.5 5.5z M758.5 547c1.5 4-1 7.5-4.5 8v2.5l-4-3.5l4-3.5v2c2-0.3 3.5-2.5 2.5-5.5z" fill="#d8f8d0" stroke="#22b422" stroke-width="1.3"/><circle cx="772" cy="551.2" r="2.6" fill="none" stroke="#1a2a4a" stroke-width="1.1"/><circle cx="778.8" cy="551.2" r="2.6" fill="none" stroke="#1a2a4a" stroke-width="1.1"/><path d="M774.6 550.5h1.6M769.6 550l2-3.5M781.3 550l2-3.5h1.8v1.8" fill="none" stroke="#1a2a4a" stroke-width="1"/><path d="M794.5 552l1-2.5l6-6l1.8 1.8l-6 6z" fill="#f0c060" stroke="#806020" stroke-width="0.8"/><path d="M795 552l0.8-2l1.2 1.2z" fill="#000"/><path d="M799.5 551h5v-2.5l4.5 4l-4.5 4v-2.5h-5z" fill="#9ac8e0" stroke="#4a7a9a" stroke-width="0.9"/><path d="M818 548.5h3.5v-2l3.5 3l-3.5 3v-2h-3.5z" fill="#fff0a0" stroke="#d0a020" stroke-width="0.9"/><path d="M827.5 545.5v10M827.5 549.5h3M827.5 554.5h3" fill="none" stroke="#4a6a9a" stroke-width="1"/><rect x="826" y="544.5" width="3" height="2.5" fill="#fff" stroke="#4a7ab0" stroke-width="0.8"/><rect x="830.5" y="548.5" width="2.5" height="2.5" fill="#fff" stroke="#4a7ab0" stroke-width="0.8"/><rect x="830.5" y="553.5" width="2.5" height="2.5" fill="#fff" stroke="#4a7ab0" stroke-width="0.8"/><path d="M831 544.5h2" stroke="#4a7ab0"/><path d="M844.5 543.5h3v4h2.5l-4 4.5l-4-4.5h2.5z" fill="#fde890" stroke="#c89a20" stroke-width="0.9"/><path d="M852 556.5h3v-4h2.5l-4-4.5l-4 4.5h2.5z" fill="#fde890" stroke="#c89a20" stroke-width="0.9"/><rect x="866.5" y="542.5" width="8" height="4" fill="#fff" stroke="#4a6aa0"/><path d="M871.5 546.5h5l3 3v8h-8z" fill="#fdfbf0" stroke="#b09860"/><path d="M867 548c1 5 4.5 6 7.5 5v-2l4 3l-4 3.5v-2c-4 0.5-7.5-2-8.5-7z" fill="#7ab8d8" stroke="#2a5a9a" stroke-width="0.9"/><rect x="891.5" y="543.5" width="12.5" height="14" fill="#fafcfc" stroke="#8aa0a0"/><line x1="891.5" y1="550.5" x2="904" y2="550.5" stroke="#8aa0a0"/><rect x="893" y="545" width="3" height="3" fill="#2a9a5a"/><rect x="893" y="552.5" width="3" height="3" fill="#6a7a8a"/><path d="M897 546.5h5M897 554h5" stroke="#4a6a6a" stroke-width="0.8"/><rect x="914.5" y="543.5" width="13.5" height="13.5" fill="#fff" stroke="#3a5a9a"/><path d="M915 544h3.5l-3.5 3.5z" fill="#1a3a7a"/><path d="M914.5 549.5h5M920 552h6.5M920 554.5h6.5M920 549.5h6.5" stroke="#5a7ab0" stroke-width="0.8"/><path d="M938.5 544.5h8v12h-8z" fill="#fdfdf0" stroke="#a8a888"/><path d="M942.5 546.5h6.5l3 3v7.5h-9.5z" fill="#fdfdf4" stroke="#b8a870"/><path d="M944 550h6.5M944 552h6.5M944 554h6.5M939.5 547h2M939.5 549h2" stroke="#4a6aa0" stroke-width="0.8"/><rect x="961.5" y="543.5" width="6.5" height="8" fill="#fff" stroke="#8a9aaa"/><rect x="969.5" y="550.5" width="7" height="7.5" fill="#fff" stroke="#8a9aaa"/><path d="M963 545.5h1M965 545.5h2M963 548h1M965 548h2M971 552.5h1M973 552.5h2M971 555h1M973 555h2" stroke="#3a5a8a"/><path d="M970 543.5c2 0 3 1 3 3M963.5 553c0 2 1 3 3 3" fill="none" stroke="#2a4a7a"/><path d="M999 555l4-6l8-6l3 3l-6 8l-6 4z" fill="#f8d880" stroke="#c89a40" stroke-width="0.8"/><path d="M1001.5 551.5l5 5l-3 2l-4-4z" fill="#8a8a8a"/><path d="M999 555l3 3l-3.5 0.5z" fill="#fffff0"/><path d="M1168.5 547h7v-3l6.5 5.5l-6.5 6v-3h-7z" fill="url(#ylw)" stroke="#c89a20"/><path d="M1201.5 542.5h4l2 2v8h-6z" fill="#fdfbf0" stroke="#a89860"/><rect x="1194.5" y="552.5" width="10" height="4.5" fill="#fff" stroke="#3a6a9a"/><path d="M1192 551c0-3 2-5 5-5v-2l3.5 3.5l-3.5 3v-2c-2 0-3 1-3.5 2.5z" fill="#8ad860" stroke="#3a8a2a" stroke-width="0.9"/><path d="M1217.5 545.5h9l2 2v10h-11z" fill="#fffbd0" stroke="#b8a030"/><path d="M1219 548h6M1219 550.5h7M1219 553h5M1219 555.5h5" stroke="#4a5a7a" stroke-width="0.9"/><path d="M1219 543.5v2M1221 543.5v2M1223 543.5v2M1225 543.5v2" stroke="#333" stroke-width="0.7"/><path d="M1229 543l1 2l2 1l-2 1l-1 2l-1-2l-2-1l2-1z" fill="#fff8c0" stroke="#d0a030" stroke-width="0.8"/><rect x="1240.5" y="543.5" width="12" height="12" rx="1" fill="url(#sav2)" stroke="#6f8ac4"/><rect x="1243" y="543.5" width="7" height="4.5" fill="#f4f4e4" stroke="#8ea3d0"/><rect x="1243.5" y="551" width="5.5" height="4.5" fill="#d6def2" stroke="#8ea3d0"/><path d="M1247 557.5h1.6M1250 557.5h1.6M1253 557.5h1.6" stroke="#1a2a6a" stroke-width="1.6"/><path d="M1268.5 543.5h4v6h4l-6 6.5l-6-6.5h4z" fill="url(#ylw)" stroke="#c89a20"/></svg><div class="a" style="left:595px;top:560px;width:1073px;height:367px;border:1px solid #8e8e8e;border-bottom-color:#a5a5a5;background:#fff"></div><div class="a" style="left:597px;top:561px;width:1054px;height:18px;background:linear-gradient(#fdfdfd,#f0f0f0);border-bottom:2px solid #7d7d7d"></div><div class="t" style="left:634.20px;top:563.89px;font-size:12.3px;color:#111;transform:scaleX(0.9515);transform-origin:0 0;clip-path:inset(0 0 0 0);">ID</div><div class="a" style="left:789px;top:562px;width:1px;height:15px;background:#b9b9b9"></div><div class="t" style="left:793.00px;top:563.89px;font-size:12.3px;color:#111;transform:scaleX(0.9109);transform-origin:0 0;clip-path:inset(0 0 0 0);">RECORDTYPEID</div><div class="a" style="left:895px;top:562px;width:1px;height:15px;background:#b9b9b9"></div><div class="t" style="left:898.50px;top:563.89px;font-size:12.3px;color:#111;transform:scaleX(0.9469);transform-origin:0 0;clip-path:inset(0 0 0 0);">WHOID</div><div class="a" style="left:1060px;top:562px;width:1px;height:15px;background:#b9b9b9"></div><div class="t" style="left:1063.70px;top:563.89px;font-size:12.3px;color:#111;transform:scaleX(0.9856);transform-origin:0 0;clip-path:inset(0 0 0 0);">WHATID</div><div class="a" style="left:1220px;top:562px;width:1px;height:15px;background:#b9b9b9"></div><div class="t" style="left:1224.60px;top:563.89px;font-size:12.3px;color:#111;transform:scaleX(0.8335);transform-origin:0 0;clip-path:inset(0 0 0 0);">SUBJECT</div><div class="a" style="left:1630px;top:562px;width:1px;height:15px;background:#b9b9b9"></div><div class="t" style="left:1634.00px;top:563.89px;font-size:12.3px;color:#111;transform:scaleX(1.1123);transform-origin:0 0;">AC</div><div class="a" style="left:629px;top:561px;width:2px;height:16px;background:#b0b0b0"></div><div class="a" style="left:631px;top:579px;width:1020px;height:15px;background:#fff;border-bottom:1px solid #c6c6c6"></div><div class="a" style="left:597px;top:579px;width:33px;height:15px;background:#c3c3c3;border-bottom:1px solid #e6e6e6"></div><div class="t cell" style="left:599px;top:580px">1</div><div class="a" style="left:789px;top:579px;width:1px;height:15px;background:#c6c6c6"></div><div class="t cell" style="left:633px;top:580px;max-width:155px;overflow:hidden">00T3000000L0RknEAF</div><div class="a" style="left:790px;top:579px;width:105px;height:14px;background:#fdd0ee"></div><div class="a" style="left:895px;top:579px;width:1px;height:15px;background:#c6c6c6"></div><div class="a" style="left:896px;top:579px;width:164px;height:14px;background:#fdd0ee"></div><div class="a" style="left:1060px;top:579px;width:1px;height:15px;background:#c6c6c6"></div><div class="a" style="left:1061px;top:579px;width:159px;height:14px;background:#fdd0ee"></div><div class="a" style="left:1220px;top:579px;width:1px;height:15px;background:#c6c6c6"></div><div class="a" style="left:1630px;top:579px;width:1px;height:15px;background:#c6c6c6"></div><div class="t cell" style="left:1222px;top:580px;max-width:407px;overflow:hidden">Get Massage</div><div class="t cell" style="left:1632px;top:580px;max-width:18px;overflow:hidden">200</div><div class="a" style="left:631px;top:594px;width:1020px;height:15px;background:#ebebeb;border-bottom:1px solid #c6c6c6"></div><div class="a" style="left:597px;top:594px;width:33px;height:15px;background:#c3c3c3;border-bottom:1px solid #e6e6e6"></div><div class="t cell" style="left:599px;top:595px">2</div><div class="a" style="left:789px;top:594px;width:1px;height:15px;background:#c6c6c6"></div><div class="t cell" style="left:633px;top:595px;max-width:155px;overflow:hidden">00T3000000L0RqSEAV</div><div class="a" style="left:790px;top:594px;width:105px;height:14px;background:#fdd0ee"></div><div class="a" style="left:895px;top:594px;width:1px;height:15px;background:#c6c6c6"></div><div class="a" style="left:896px;top:594px;width:164px;height:14px;background:#fdd0ee"></div><div class="a" style="left:1060px;top:594px;width:1px;height:15px;background:#c6c6c6"></div><div class="a" style="left:1061px;top:594px;width:159px;height:14px;background:#fdd0ee"></div><div class="a" style="left:1220px;top:594px;width:1px;height:15px;background:#c6c6c6"></div><div class="a" style="left:1630px;top:594px;width:1px;height:15px;background:#c6c6c6"></div><div class="t cell" style="left:1222px;top:595px;max-width:407px;overflow:hidden">Give Jenn a BIG RAISE</div><div class="t cell" style="left:1632px;top:595px;max-width:18px;overflow:hidden">200</div><div class="a" style="left:631px;top:609px;width:1020px;height:15px;background:#fff;border-bottom:1px solid #c6c6c6"></div><div class="a" style="left:597px;top:609px;width:33px;height:15px;background:#c3c3c3;border-bottom:1px solid #e6e6e6"></div><div class="t cell" style="left:599px;top:610px">3</div><div class="a" style="left:789px;top:609px;width:1px;height:15px;background:#c6c6c6"></div><div class="t cell" style="left:633px;top:610px;max-width:155px;overflow:hidden">00T3000000OiyJgEAJ</div><div class="a" style="left:790px;top:609px;width:105px;height:14px;background:#fdd0ee"></div><div class="a" style="left:895px;top:609px;width:1px;height:15px;background:#c6c6c6"></div><div class="a" style="left:1060px;top:609px;width:1px;height:15px;background:#c6c6c6"></div><div class="t cell" style="left:897px;top:610px;max-width:162px;overflow:hidden">0033000000GmXHJAA3</div><div class="a" style="left:1220px;top:609px;width:1px;height:15px;background:#c6c6c6"></div><div class="t cell" style="left:1062px;top:610px;max-width:157px;overflow:hidden">006300000058wgmAAA</div><div class="a" style="left:1630px;top:609px;width:1px;height:15px;background:#c6c6c6"></div><div class="t cell" style="left:1222px;top:610px;max-width:407px;overflow:hidden">Check back in to see if she&#x27;s interested in membership-per RS</div><div class="t cell" style="left:1632px;top:610px;max-width:18px;overflow:hidden">200</div><div class="a" style="left:631px;top:624px;width:1020px;height:15px;background:#ebebeb;border-bottom:1px solid #c6c6c6"></div><div class="a" style="left:597px;top:624px;width:33px;height:15px;background:#c3c3c3;border-bottom:1px solid #e6e6e6"></div><div class="t cell" style="left:599px;top:625px">4</div><div class="a" style="left:789px;top:624px;width:1px;height:15px;background:#c6c6c6"></div><div class="t cell" style="left:633px;top:625px;max-width:155px;overflow:hidden">00T3000000P3LopEAF</div><div class="a" style="left:790px;top:624px;width:105px;height:14px;background:#fdd0ee"></div><div class="a" style="left:895px;top:624px;width:1px;height:15px;background:#c6c6c6"></div><div class="a" style="left:1060px;top:624px;width:1px;height:15px;background:#c6c6c6"></div><div class="t cell" style="left:897px;top:625px;max-width:162px;overflow:hidden">0033000000GmXKnAAN</div><div class="a" style="left:1220px;top:624px;width:1px;height:15px;background:#c6c6c6"></div><div class="t cell" style="left:1062px;top:625px;max-width:157px;overflow:hidden">006300000058yKhAAI</div><div class="a" style="left:1630px;top:624px;width:1px;height:15px;background:#c6c6c6"></div><div class="t cell" style="left:1222px;top:625px;max-width:407px;overflow:hidden">Follow-up on nomination</div><div class="t cell" style="left:1632px;top:625px;max-width:18px;overflow:hidden">200</div><div class="a" style="left:631px;top:639px;width:1020px;height:15px;background:#fff;border-bottom:1px solid #c6c6c6"></div><div class="a" style="left:597px;top:639px;width:33px;height:15px;background:#c3c3c3;border-bottom:1px solid #e6e6e6"></div><div class="t cell" style="left:599px;top:640px">5</div><div class="a" style="left:789px;top:639px;width:1px;height:15px;background:#c6c6c6"></div><div class="t cell" style="left:633px;top:640px;max-width:155px;overflow:hidden">00T3000000P3N4pEAF</div><div class="a" style="left:790px;top:639px;width:105px;height:14px;background:#fdd0ee"></div><div class="a" style="left:895px;top:639px;width:1px;height:15px;background:#c6c6c6"></div><div class="a" style="left:1060px;top:639px;width:1px;height:15px;background:#c6c6c6"></div><div class="t cell" style="left:897px;top:640px;max-width:162px;overflow:hidden">0033000000GmXHnAAN</div><div class="a" style="left:1220px;top:639px;width:1px;height:15px;background:#c6c6c6"></div><div class="t cell" style="left:1062px;top:640px;max-width:157px;overflow:hidden">006300000058xlaAAA</div><div class="a" style="left:1630px;top:639px;width:1px;height:15px;background:#c6c6c6"></div><div class="t cell" style="left:1222px;top:640px;max-width:407px;overflow:hidden">Need update from Bain - gave go ahead 1/25</div><div class="t cell" style="left:1632px;top:640px;max-width:18px;overflow:hidden">200</div><div class="a" style="left:631px;top:654px;width:1020px;height:15px;background:#ebebeb;border-bottom:1px solid #c6c6c6"></div><div class="a" style="left:597px;top:654px;width:33px;height:15px;background:#c3c3c3;border-bottom:1px solid #e6e6e6"></div><div class="t cell" style="left:599px;top:655px">6</div><div class="a" style="left:789px;top:654px;width:1px;height:15px;background:#c6c6c6"></div><div class="t cell" style="left:633px;top:655px;max-width:155px;overflow:hidden">00T3000000P3tuvEAB</div><div class="a" style="left:790px;top:654px;width:105px;height:14px;background:#fdd0ee"></div><div class="a" style="left:895px;top:654px;width:1px;height:15px;background:#c6c6c6"></div><div class="a" style="left:1060px;top:654px;width:1px;height:15px;background:#c6c6c6"></div><div class="t cell" style="left:897px;top:655px;max-width:162px;overflow:hidden">0033000000H9aNBAAZ</div><div class="a" style="left:1220px;top:654px;width:1px;height:15px;background:#c6c6c6"></div><div class="t cell" style="left:1062px;top:655px;max-width:157px;overflow:hidden">00630000005QgzhAAC</div><div class="a" style="left:1630px;top:654px;width:1px;height:15px;background:#c6c6c6"></div><div class="t cell" style="left:1222px;top:655px;max-width:407px;overflow:hidden">Check-in w/ Ed - can he join this year?</div><div class="t cell" style="left:1632px;top:655px;max-width:18px;overflow:hidden">200</div><div class="a" style="left:631px;top:669px;width:1020px;height:15px;background:#fff;border-bottom:1px solid #c6c6c6"></div><div class="a" style="left:597px;top:669px;width:33px;height:15px;background:#c3c3c3;border-bottom:1px solid #e6e6e6"></div><div class="t cell" style="left:599px;top:670px">7</div><div class="a" style="left:789px;top:669px;width:1px;height:15px;background:#c6c6c6"></div><div class="t cell" style="left:633px;top:670px;max-width:155px;overflow:hidden">00T3000000P3yrbEAB</div><div class="a" style="left:790px;top:669px;width:105px;height:14px;background:#fdd0ee"></div><div class="a" style="left:895px;top:669px;width:1px;height:15px;background:#c6c6c6"></div><div class="a" style="left:1060px;top:669px;width:1px;height:15px;background:#c6c6c6"></div><div class="t cell" style="left:897px;top:670px;max-width:162px;overflow:hidden">0033000000GmXPYAA3</div><div class="a" style="left:1220px;top:669px;width:1px;height:15px;background:#c6c6c6"></div><div class="t cell" style="left:1062px;top:670px;max-width:157px;overflow:hidden">006300000058ypVAAQ</div><div class="a" style="left:1630px;top:669px;width:1px;height:15px;background:#c6c6c6"></div><div class="t cell" style="left:1222px;top:670px;max-width:407px;overflow:hidden">Check-in w/ Jeff - couldn&#x27;t afford last year but was interested</div><div class="t cell" style="left:1632px;top:670px;max-width:18px;overflow:hidden">200</div><div class="a" style="left:631px;top:684px;width:1020px;height:15px;background:#ebebeb;border-bottom:1px solid #c6c6c6"></div><div class="a" style="left:597px;top:684px;width:33px;height:15px;background:#c3c3c3;border-bottom:1px solid #e6e6e6"></div><div class="t cell" style="left:599px;top:685px">8</div><div class="a" style="left:789px;top:684px;width:1px;height:15px;background:#c6c6c6"></div><div class="t cell" style="left:633px;top:685px;max-width:155px;overflow:hidden">00T3000000P46qnEAB</div><div class="a" style="left:790px;top:684px;width:105px;height:14px;background:#fdd0ee"></div><div class="a" style="left:895px;top:684px;width:1px;height:15px;background:#c6c6c6"></div><div class="a" style="left:1060px;top:684px;width:1px;height:15px;background:#c6c6c6"></div><div class="t cell" style="left:897px;top:685px;max-width:162px;overflow:hidden">0033000000H9i0pAAB</div><div class="a" style="left:1220px;top:684px;width:1px;height:15px;background:#c6c6c6"></div><div class="t cell" style="left:1062px;top:685px;max-width:157px;overflow:hidden">00630000005S0bnAAC</div><div class="a" style="left:1630px;top:684px;width:1px;height:15px;background:#c6c6c6"></div><div class="t cell" style="left:1222px;top:685px;max-width:407px;overflow:hidden">Re-approach about membership this year</div><div class="t cell" style="left:1632px;top:685px;max-width:18px;overflow:hidden">200</div><div class="a" style="left:631px;top:699px;width:1020px;height:15px;background:#fff;border-bottom:1px solid #c6c6c6"></div><div class="a" style="left:597px;top:699px;width:33px;height:15px;background:#c3c3c3;border-bottom:1px solid #e6e6e6"></div><div class="t cell" style="left:599px;top:700px">9</div><div class="a" style="left:789px;top:699px;width:1px;height:15px;background:#c6c6c6"></div><div class="t cell" style="left:633px;top:700px;max-width:155px;overflow:hidden">00T3000000P47LYEAZ</div><div class="a" style="left:790px;top:699px;width:105px;height:14px;background:#fdd0ee"></div><div class="a" style="left:895px;top:699px;width:1px;height:15px;background:#c6c6c6"></div><div class="a" style="left:1060px;top:699px;width:1px;height:15px;background:#c6c6c6"></div><div class="t cell" style="left:897px;top:700px;max-width:162px;overflow:hidden">0033000000GmXKmAAN</div><div class="a" style="left:1220px;top:699px;width:1px;height:15px;background:#c6c6c6"></div><div class="t cell" style="left:1062px;top:700px;max-width:157px;overflow:hidden">006300000058xrqAAA</div><div class="a" style="left:1630px;top:699px;width:1px;height:15px;background:#c6c6c6"></div><div class="t cell" style="left:1222px;top:700px;max-width:407px;overflow:hidden">Check back to see if good target prospect</div><div class="t cell" style="left:1632px;top:700px;max-width:18px;overflow:hidden">200</div><div class="a" style="left:631px;top:714px;width:1020px;height:15px;background:#ebebeb;border-bottom:1px solid #c6c6c6"></div><div class="a" style="left:597px;top:714px;width:33px;height:15px;background:#c3c3c3;border-bottom:1px solid #e6e6e6"></div><div class="t cell" style="left:599px;top:715px">10</div><div class="a" style="left:789px;top:714px;width:1px;height:15px;background:#c6c6c6"></div><div class="t cell" style="left:633px;top:715px;max-width:155px;overflow:hidden">00T3000000POeAnEAL</div><div class="a" style="left:790px;top:714px;width:105px;height:14px;background:#fdd0ee"></div><div class="a" style="left:895px;top:714px;width:1px;height:15px;background:#c6c6c6"></div><div class="a" style="left:1060px;top:714px;width:1px;height:15px;background:#c6c6c6"></div><div class="t cell" style="left:897px;top:715px;max-width:162px;overflow:hidden">0033000000GmXIZAA3</div><div class="a" style="left:1220px;top:714px;width:1px;height:15px;background:#c6c6c6"></div><div class="t cell" style="left:1062px;top:715px;max-width:157px;overflow:hidden">006300000058xw5AAA</div><div class="a" style="left:1630px;top:714px;width:1px;height:15px;background:#c6c6c6"></div><div class="t cell" style="left:1222px;top:715px;max-width:407px;overflow:hidden">Check back to see if interested in membership</div><div class="t cell" style="left:1632px;top:715px;max-width:18px;overflow:hidden">200</div><div class="a" style="left:631px;top:729px;width:1020px;height:15px;background:#fff;border-bottom:1px solid #c6c6c6"></div><div class="a" style="left:597px;top:729px;width:33px;height:15px;background:#c3c3c3;border-bottom:1px solid #e6e6e6"></div><div class="t cell" style="left:599px;top:730px">11</div><div class="a" style="left:789px;top:729px;width:1px;height:15px;background:#c6c6c6"></div><div class="t cell" style="left:633px;top:730px;max-width:155px;overflow:hidden">00T3000000PREZaEAP</div><div class="a" style="left:790px;top:729px;width:105px;height:14px;background:#fdd0ee"></div><div class="a" style="left:895px;top:729px;width:1px;height:15px;background:#c6c6c6"></div><div class="a" style="left:1060px;top:729px;width:1px;height:15px;background:#c6c6c6"></div><div class="t cell" style="left:897px;top:730px;max-width:162px;overflow:hidden">0033000000GmXOiAAN</div><div class="a" style="left:1220px;top:729px;width:1px;height:15px;background:#c6c6c6"></div><div class="t cell" style="left:1062px;top:730px;max-width:157px;overflow:hidden">006300000058x9qAAA</div><div class="a" style="left:1630px;top:729px;width:1px;height:15px;background:#c6c6c6"></div><div class="t cell" style="left:1222px;top:730px;max-width:407px;overflow:hidden">Check nexis to see if they&#x27;ve found a replacement for Cywinski</div><div class="t cell" style="left:1632px;top:730px;max-width:18px;overflow:hidden">200</div><div class="a" style="left:631px;top:744px;width:1020px;height:15px;background:#ebebeb;border-bottom:1px solid #c6c6c6"></div><div class="a" style="left:597px;top:744px;width:33px;height:15px;background:#c3c3c3;border-bottom:1px solid #e6e6e6"></div><div class="t cell" style="left:599px;top:745px">12</div><div class="a" style="left:789px;top:744px;width:1px;height:15px;background:#c6c6c6"></div><div class="t cell" style="left:633px;top:745px;max-width:155px;overflow:hidden">00T3000000PRR8rEAH</div><div class="a" style="left:790px;top:744px;width:105px;height:14px;background:#fdd0ee"></div><div class="a" style="left:895px;top:744px;width:1px;height:15px;background:#c6c6c6"></div><div class="a" style="left:1060px;top:744px;width:1px;height:15px;background:#c6c6c6"></div><div class="t cell" style="left:897px;top:745px;max-width:162px;overflow:hidden">0033000000JFhGIAAL</div><div class="a" style="left:1220px;top:744px;width:1px;height:15px;background:#c6c6c6"></div><div class="t cell" style="left:1062px;top:745px;max-width:157px;overflow:hidden">00630000007A3bZAAS</div><div class="a" style="left:1630px;top:744px;width:1px;height:15px;background:#c6c6c6"></div><div class="t cell" style="left:1222px;top:745px;max-width:407px;overflow:hidden">Nominated by Shane Freeman at ANZ (HR50)</div><div class="t cell" style="left:1632px;top:745px;max-width:18px;overflow:hidden">200</div><div class="a" style="left:631px;top:759px;width:1020px;height:15px;background:#fff;border-bottom:1px solid #c6c6c6"></div><div class="a" style="left:597px;top:759px;width:33px;height:15px;background:#c3c3c3;border-bottom:1px solid #e6e6e6"></div><div class="t cell" style="left:599px;top:760px">13</div><div class="a" style="left:789px;top:759px;width:1px;height:15px;background:#c6c6c6"></div><div class="t cell" style="left:633px;top:760px;max-width:155px;overflow:hidden">00T3000000PfvKSEAZ</div><div class="a" style="left:790px;top:759px;width:105px;height:14px;background:#fdd0ee"></div><div class="a" style="left:895px;top:759px;width:1px;height:15px;background:#c6c6c6"></div><div class="a" style="left:1060px;top:759px;width:1px;height:15px;background:#c6c6c6"></div><div class="t cell" style="left:897px;top:760px;max-width:162px;overflow:hidden">0033000000HirF8AAJ</div><div class="a" style="left:1220px;top:759px;width:1px;height:15px;background:#c6c6c6"></div><div class="t cell" style="left:1062px;top:760px;max-width:157px;overflow:hidden">00630000005xfWaAAI</div><div class="a" style="left:1630px;top:759px;width:1px;height:15px;background:#c6c6c6"></div><div class="t cell" style="left:1222px;top:760px;max-width:407px;overflow:hidden">Send email</div><div class="t cell" style="left:1632px;top:760px;max-width:18px;overflow:hidden">200</div><div class="a" style="left:631px;top:774px;width:1020px;height:15px;background:#ebebeb;border-bottom:1px solid #c6c6c6"></div><div class="a" style="left:597px;top:774px;width:33px;height:15px;background:#c3c3c3;border-bottom:1px solid #e6e6e6"></div><div class="t cell" style="left:599px;top:775px">14</div><div class="a" style="left:789px;top:774px;width:1px;height:15px;background:#c6c6c6"></div><div class="t cell" style="left:633px;top:775px;max-width:155px;overflow:hidden">00T3000000Q8rexEAB</div><div class="a" style="left:790px;top:774px;width:105px;height:14px;background:#fdd0ee"></div><div class="a" style="left:895px;top:774px;width:1px;height:15px;background:#c6c6c6"></div><div class="a" style="left:1060px;top:774px;width:1px;height:15px;background:#c6c6c6"></div><div class="t cell" style="left:897px;top:775px;max-width:162px;overflow:hidden">0033000000JbvQzAAJ</div><div class="a" style="left:1061px;top:774px;width:159px;height:14px;background:#fdd0ee"></div><div class="a" style="left:1220px;top:774px;width:1px;height:15px;background:#c6c6c6"></div><div class="a" style="left:1630px;top:774px;width:1px;height:15px;background:#c6c6c6"></div><div class="t cell" style="left:1222px;top:775px;max-width:407px;overflow:hidden">Check w/ Leanne - we&#x27;re going after Owen first</div><div class="t cell" style="left:1632px;top:775px;max-width:18px;overflow:hidden">200</div><div class="a" style="left:631px;top:789px;width:1020px;height:15px;background:#fff;border-bottom:1px solid #c6c6c6"></div><div class="a" style="left:597px;top:789px;width:33px;height:15px;background:#c3c3c3;border-bottom:1px solid #e6e6e6"></div><div class="t cell" style="left:599px;top:790px">15</div><div class="a" style="left:789px;top:789px;width:1px;height:15px;background:#c6c6c6"></div><div class="t cell" style="left:633px;top:790px;max-width:155px;overflow:hidden">00T3000000Q8rugEAB</div><div class="a" style="left:790px;top:789px;width:105px;height:14px;background:#fdd0ee"></div><div class="a" style="left:895px;top:789px;width:1px;height:15px;background:#c6c6c6"></div><div class="a" style="left:1060px;top:789px;width:1px;height:15px;background:#c6c6c6"></div><div class="t cell" style="left:897px;top:790px;max-width:162px;overflow:hidden">0033000000JbvRJAAZ</div><div class="a" style="left:1061px;top:789px;width:159px;height:14px;background:#fdd0ee"></div><div class="a" style="left:1220px;top:789px;width:1px;height:15px;background:#c6c6c6"></div><div class="a" style="left:1630px;top:789px;width:1px;height:15px;background:#c6c6c6"></div><div class="t cell" style="left:1222px;top:790px;max-width:407px;overflow:hidden">Check w/ Leanne - we&#x27;re going after Owen first</div><div class="t cell" style="left:1632px;top:790px;max-width:18px;overflow:hidden">200</div><div class="a" style="left:631px;top:804px;width:1020px;height:15px;background:#ebebeb;border-bottom:1px solid #c6c6c6"></div><div class="a" style="left:597px;top:804px;width:33px;height:15px;background:#c3c3c3;border-bottom:1px solid #e6e6e6"></div><div class="t cell" style="left:599px;top:805px">16</div><div class="a" style="left:789px;top:804px;width:1px;height:15px;background:#c6c6c6"></div><div class="t cell" style="left:633px;top:805px;max-width:155px;overflow:hidden">00T3000000Q8sauEAB</div><div class="a" style="left:790px;top:804px;width:105px;height:14px;background:#fdd0ee"></div><div class="a" style="left:895px;top:804px;width:1px;height:15px;background:#c6c6c6"></div><div class="a" style="left:1060px;top:804px;width:1px;height:15px;background:#c6c6c6"></div><div class="t cell" style="left:897px;top:805px;max-width:162px;overflow:hidden">0033000000JbukoAAB</div><div class="a" style="left:1220px;top:804px;width:1px;height:15px;background:#c6c6c6"></div><div class="t cell" style="left:1062px;top:805px;max-width:157px;overflow:hidden">0013000000C4fFCAAZ</div><div class="a" style="left:1630px;top:804px;width:1px;height:15px;background:#c6c6c6"></div><div class="t cell" style="left:1222px;top:805px;max-width:407px;overflow:hidden">Check w/ Leanne - we&#x27;re going after Sheares first</div><div class="t cell" style="left:1632px;top:805px;max-width:18px;overflow:hidden">200</div><div class="a" style="left:631px;top:819px;width:1020px;height:15px;background:#fff;border-bottom:1px solid #c6c6c6"></div><div class="a" style="left:597px;top:819px;width:33px;height:15px;background:#c3c3c3;border-bottom:1px solid #e6e6e6"></div><div class="t cell" style="left:599px;top:820px">17</div><div class="a" style="left:789px;top:819px;width:1px;height:15px;background:#c6c6c6"></div><div class="t cell" style="left:633px;top:820px;max-width:155px;overflow:hidden">00T3000000QAeJbEAL</div><div class="a" style="left:790px;top:819px;width:105px;height:14px;background:#fdd0ee"></div><div class="a" style="left:895px;top:819px;width:1px;height:15px;background:#c6c6c6"></div><div class="a" style="left:1060px;top:819px;width:1px;height:15px;background:#c6c6c6"></div><div class="t cell" style="left:897px;top:820px;max-width:162px;overflow:hidden">0033000000Ju9J9AAJ</div><div class="a" style="left:1220px;top:819px;width:1px;height:15px;background:#c6c6c6"></div><div class="t cell" style="left:1062px;top:820px;max-width:157px;overflow:hidden">00630000007bIQUAA2</div><div class="a" style="left:1630px;top:819px;width:1px;height:15px;background:#c6c6c6"></div><div class="t cell" style="left:1222px;top:820px;max-width:407px;overflow:hidden">Follow up call</div><div class="t cell" style="left:1632px;top:820px;max-width:18px;overflow:hidden">200</div><div class="a" style="left:631px;top:834px;width:1020px;height:15px;background:#ebebeb;border-bottom:1px solid #c6c6c6"></div><div class="a" style="left:597px;top:834px;width:33px;height:15px;background:#c3c3c3;border-bottom:1px solid #e6e6e6"></div><div class="t cell" style="left:599px;top:835px">18</div><div class="a" style="left:789px;top:834px;width:1px;height:15px;background:#c6c6c6"></div><div class="t cell" style="left:633px;top:835px;max-width:155px;overflow:hidden">00T3000000QBXPeEAP</div><div class="a" style="left:790px;top:834px;width:105px;height:14px;background:#fdd0ee"></div><div class="a" style="left:895px;top:834px;width:1px;height:15px;background:#c6c6c6"></div><div class="a" style="left:1060px;top:834px;width:1px;height:15px;background:#c6c6c6"></div><div class="t cell" style="left:897px;top:835px;max-width:162px;overflow:hidden">0033000000Ju9zlAAB</div><div class="a" style="left:1220px;top:834px;width:1px;height:15px;background:#c6c6c6"></div><div class="t cell" style="left:1062px;top:835px;max-width:157px;overflow:hidden">00630000007bIc2AAE</div><div class="a" style="left:1630px;top:834px;width:1px;height:15px;background:#c6c6c6"></div><div class="t cell" style="left:1222px;top:835px;max-width:407px;overflow:hidden">Leanne to provide update to Bain</div><div class="t cell" style="left:1632px;top:835px;max-width:18px;overflow:hidden">200</div><div class="a" style="left:631px;top:849px;width:1020px;height:15px;background:#fff;border-bottom:1px solid #c6c6c6"></div><div class="a" style="left:597px;top:849px;width:33px;height:15px;background:#c3c3c3;border-bottom:1px solid #e6e6e6"></div><div class="t cell" style="left:599px;top:850px">19</div><div class="a" style="left:789px;top:849px;width:1px;height:15px;background:#c6c6c6"></div><div class="t cell" style="left:633px;top:850px;max-width:155px;overflow:hidden">00T3000000QV8CfEAL</div><div class="a" style="left:790px;top:849px;width:105px;height:14px;background:#fdd0ee"></div><div class="a" style="left:895px;top:849px;width:1px;height:15px;background:#c6c6c6"></div><div class="a" style="left:1060px;top:849px;width:1px;height:15px;background:#c6c6c6"></div><div class="t cell" style="left:897px;top:850px;max-width:162px;overflow:hidden">0033000000GmXM7AAN</div><div class="a" style="left:1220px;top:849px;width:1px;height:15px;background:#c6c6c6"></div><div class="t cell" style="left:1062px;top:850px;max-width:157px;overflow:hidden">006300000058ympAAA</div><div class="a" style="left:1630px;top:849px;width:1px;height:15px;background:#c6c6c6"></div><div class="t cell" style="left:1222px;top:850px;max-width:407px;overflow:hidden">Invoice status check - check w/ RS first</div><div class="t cell" style="left:1632px;top:850px;max-width:18px;overflow:hidden">200</div><div class="a" style="left:631px;top:864px;width:1020px;height:15px;background:#ebebeb;border-bottom:1px solid #c6c6c6"></div><div class="a" style="left:597px;top:864px;width:33px;height:15px;background:#c3c3c3;border-bottom:1px solid #e6e6e6"></div><div class="t cell" style="left:599px;top:865px">20</div><div class="a" style="left:789px;top:864px;width:1px;height:15px;background:#c6c6c6"></div><div class="t cell" style="left:633px;top:865px;max-width:155px;overflow:hidden">00T3000000QV8TjEAL</div><div class="a" style="left:790px;top:864px;width:105px;height:14px;background:#fdd0ee"></div><div class="a" style="left:895px;top:864px;width:1px;height:15px;background:#c6c6c6"></div><div class="a" style="left:1060px;top:864px;width:1px;height:15px;background:#c6c6c6"></div><div class="t cell" style="left:897px;top:865px;max-width:162px;overflow:hidden">0033000000GmXKPAA3</div><div class="a" style="left:1220px;top:864px;width:1px;height:15px;background:#c6c6c6"></div><div class="t cell" style="left:1062px;top:865px;max-width:157px;overflow:hidden">006300000058yPzAAI</div><div class="a" style="left:1630px;top:864px;width:1px;height:15px;background:#c6c6c6"></div><div class="t cell" style="left:1222px;top:865px;max-width:407px;overflow:hidden">Rick to email David &amp; reference Delmonte nomination</div><div class="t cell" style="left:1632px;top:865px;max-width:18px;overflow:hidden">200</div><div class="a" style="left:631px;top:879px;width:1020px;height:15px;background:#fff;border-bottom:1px solid #c6c6c6"></div><div class="a" style="left:597px;top:879px;width:33px;height:15px;background:#c3c3c3;border-bottom:1px solid #e6e6e6"></div><div class="t cell" style="left:599px;top:880px">21</div><div class="a" style="left:789px;top:879px;width:1px;height:15px;background:#c6c6c6"></div><div class="t cell" style="left:633px;top:880px;max-width:155px;overflow:hidden">00T3000000QV8wsEAD</div><div class="a" style="left:790px;top:879px;width:105px;height:14px;background:#fdd0ee"></div><div class="a" style="left:895px;top:879px;width:1px;height:15px;background:#c6c6c6"></div><div class="a" style="left:1060px;top:879px;width:1px;height:15px;background:#c6c6c6"></div><div class="t cell" style="left:897px;top:880px;max-width:162px;overflow:hidden">0033000000GmXLXAA3</div><div class="a" style="left:1220px;top:879px;width:1px;height:15px;background:#c6c6c6"></div><div class="t cell" style="left:1062px;top:880px;max-width:157px;overflow:hidden">006300000058yd5AAA</div><div class="a" style="left:1630px;top:879px;width:1px;height:15px;background:#c6c6c6"></div><div class="t cell" style="left:1222px;top:880px;max-width:407px;overflow:hidden">Check w/ Kevin Tsujihara</div><div class="t cell" style="left:1632px;top:880px;max-width:18px;overflow:hidden">200</div><div class="a" style="left:631px;top:894px;width:1020px;height:15px;background:#ebebeb;border-bottom:1px solid #c6c6c6"></div><div class="a" style="left:597px;top:894px;width:33px;height:15px;background:#c3c3c3;border-bottom:1px solid #e6e6e6"></div><div class="t cell" style="left:599px;top:895px">22</div><div class="a" style="left:789px;top:894px;width:1px;height:15px;background:#c6c6c6"></div><div class="t cell" style="left:633px;top:895px;max-width:155px;overflow:hidden">00T3000000QV9FaEAL</div><div class="a" style="left:790px;top:894px;width:105px;height:14px;background:#fdd0ee"></div><div class="a" style="left:895px;top:894px;width:1px;height:15px;background:#c6c6c6"></div><div class="a" style="left:1060px;top:894px;width:1px;height:15px;background:#c6c6c6"></div><div class="t cell" style="left:897px;top:895px;max-width:162px;overflow:hidden">0033000000GmXMDAA3</div><div class="a" style="left:1220px;top:894px;width:1px;height:15px;background:#c6c6c6"></div><div class="t cell" style="left:1062px;top:895px;max-width:157px;overflow:hidden">006300000058yhWAAQ</div><div class="a" style="left:1630px;top:894px;width:1px;height:15px;background:#c6c6c6"></div><div class="t cell" style="left:1222px;top:895px;max-width:407px;overflow:hidden">Need update from David</div><div class="t cell" style="left:1632px;top:895px;max-width:18px;overflow:hidden">200</div><div class="a" style="left:597px;top:908px;width:33px;height:2px;background:#c3c3c3"></div><div class="a" style="left:631px;top:908px;width:1020px;height:2px;background:#f3f3f3"></div><div class="a" style="left:1651px;top:561px;width:16px;height:365px;background:#fff"></div><div class="a" style="left:1655px;top:581px;width:8px;height:70px;border-radius:4px;background:#bdbdbd"></div><div class="a" style="left:632px;top:915px;width:106px;height:8px;border-radius:4px;background:#bdbdbd"></div><div class="a" style="left:582px;top:941px;width:1098px;height:31px;background:#c0c0c0;border-top:1px solid #8a8a8a;box-shadow:inset 0 1px 0 #f4f4f4,inset 0 2px 0 #e0e0e0"></div><div class="a" style="left:585px;top:952px;width:11px;height:11px;background:#9c9c9c;border:1px solid #aaaaaa"></div><div class="t" style="left:603.50px;top:951.58px;font-size:11.25px;color:#111;font-family:'Liberation Mono',monospace;transform:scaleX(0.8887);transform-origin:0 0;">16:25:10:388 Executing Statement . . . Done. Query Time: 5.862</div><svg class="a" style="left:1229px;top:182px;overflow:visible;filter:drop-shadow(0.4px 1px 0.9px rgba(0,0,0,0.45))" width="16" height="22"><g transform="translate(4.2,4)"><path d="M0 0V11L2.7 8.6L4.8 13.6L6.9 12.8L4.9 7.9H8Z" fill="#000" stroke="#fff" stroke-width="1.8" stroke-linejoin="round" paint-order="stroke"/></g></svg></body></html>
